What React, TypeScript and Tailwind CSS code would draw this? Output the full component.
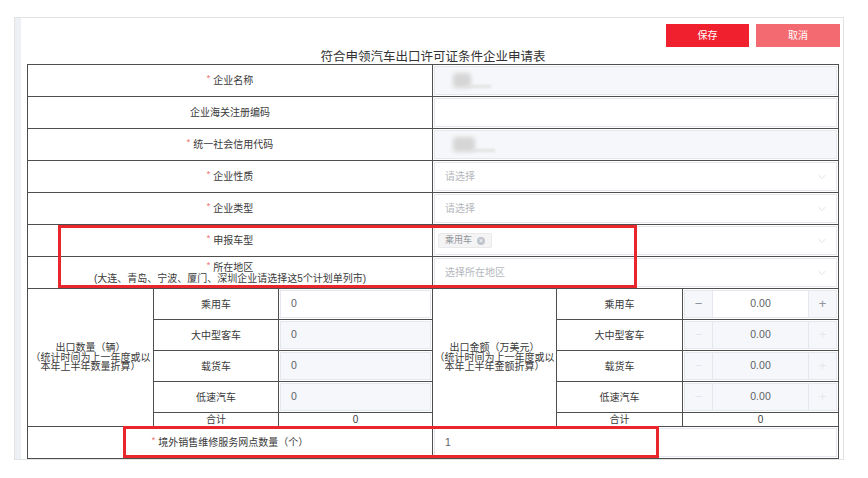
import React from 'react';
import { ChevronDown } from 'lucide-react';

const cell = 'bg-white flex items-center justify-center text-[10px] text-[#3a3a3a] text-center whitespace-nowrap';

const Req: React.FC = () => <span className="text-[#f56c6c] text-[9px] mr-[3px] -mt-[3px]">*</span>;

const Blur: React.FC<{ w: number }> = ({ w }) => (
  <div className="flex items-center ml-[8px]">
    <div className="h-[15px] bg-[#d6d6d6] blur-[2px] rounded-sm" style={{ width: w }} />
    <div className="h-[3px] w-[24px] bg-[#e2e2e2] blur-[1px] mt-[12px] -ml-[4px]" />
  </div>
);

const Input: React.FC<{ disabled?: boolean; children?: React.ReactNode; className?: string }> = ({ disabled, children, className = '' }) => (
  <div className={`bg-white p-[1px] flex ${className}`}>
    <div className={`flex-1 flex items-center border border-[#e4e7ed] px-[10px] text-[10.5px] text-[#606266] ${disabled ? 'bg-[#f5f7fa]' : 'bg-white'}`}>
      {children}
    </div>
  </div>
);

const Select: React.FC<{ placeholder?: string; children?: React.ReactNode }> = ({ placeholder, children }) => (
  <div className="col-span-3 bg-white p-[1px] flex">
    <div className="flex-1 flex items-center justify-between border border-[#e4e7ed] pl-[10px] pr-[8px] text-[10px]">
      {children ?? <span className="text-[#b4b7bd]">{placeholder}</span>}
      <ChevronDown size={12} strokeWidth={1} className="text-[#c0c4cc]" />
    </div>
  </div>
);

const Stepper: React.FC<{ active?: boolean }> = ({ active }) => (
  <div className="bg-white p-[1px] flex">
    <div className="flex-1 flex border border-[#e4e7ed] bg-[#f5f7fa] text-[10.5px]">
      <div className={`w-[28px] flex items-center justify-center border-r border-[#e4e7ed] text-[13px] ${active ? 'text-[#909399]' : 'text-[#e4e7ed]'}`}>−</div>
      <div className={`flex-1 flex items-center justify-center text-[#606266] ${active ? 'bg-white' : ''}`}>0.00</div>
      <div className={`w-[28px] flex items-center justify-center border-l border-[#e4e7ed] text-[13px] ${active ? 'text-[#909399]' : 'text-[#e4e7ed]'}`}>+</div>
    </div>
  </div>
);

const subRows = ['乘用车', '大中型客车', '载货车', '低速汽车'];

export default function App() {
  return (
    <div className="relative w-[868px] h-[478px] bg-white font-['Liberation_Sans','Noto_Sans_CJK_SC',sans-serif] overflow-hidden">
      <div className="ml-[14px] mt-[17px] w-[830px] h-[443px] border border-[#e2e2e2] flex">
        <div className="w-[6px] bg-[#edf1f5]" />
        <div className="flex-1 pt-[6px] pr-[3px]">
          <div className="flex justify-end gap-[7px]">
            <button className="w-[83px] h-[23px] bg-[#f0202e] text-white text-[10px]">保存</button>
            <button className="w-[84px] h-[23px] bg-[#f36b70] text-white text-[10px]">取消</button>
          </div>
          <div className="ml-[6px] w-[812px] h-[17px] pt-[3px] text-center text-[12.5px] leading-[14px] text-[#333]">
            符合申领汽车出口许可证条件企业申请表
          </div>
          <div className="ml-[6px] w-[812px] grid grid-cols-[125px_124px_153px_123px_125px_155px] grid-rows-[repeat(7,31px)_repeat(4,30px)_13px_31px] gap-px p-px bg-[#4f4f4f]">
            <div className={`${cell} col-span-3`}><Req />企业名称</div>
            <Input disabled className="col-span-3"><Blur w={18} /></Input>

            <div className={`${cell} col-span-3`}>企业海关注册编码</div>
            <Input className="col-span-3" />

            <div className={`${cell} col-span-3`}><Req />统一社会信用代码</div>
            <Input disabled className="col-span-3"><Blur w={22} /></Input>

            <div className={`${cell} col-span-3`}><Req />企业性质</div>
            <Select placeholder="请选择" />

            <div className={`${cell} col-span-3`}><Req />企业类型</div>
            <Select placeholder="请选择" />

            <div className={`${cell} col-span-3`}><Req />申报车型</div>
            <Select>
              <span className="-ml-[7px] h-[15px] px-[6px] flex items-center gap-[5px] bg-[#f4f4f5] border border-[#e9e9eb] rounded-[2px] text-[9px] text-[#909399]">
                乘用车
                <span className="w-[8px] h-[8px] rounded-full bg-[#c0c4cc] text-white text-[7px] leading-[8px] flex items-center justify-center">×</span>
              </span>
            </Select>

            <div className={`${cell} col-span-3 flex-col leading-[11px]`}>
              <div className="flex items-center"><Req />所在地区</div>
              <div>(大连、青岛、宁波、厦门、深圳企业请选择这5个计划单列市)</div>
            </div>
            <Select placeholder="选择所在地区" />

            <div className={`${cell} row-span-5 flex-col leading-[9.5px]`}>
              <div>出口数量（辆）</div>
              <div className="-mx-[4px]">（统计时间为上一年度或以</div>
              <div>本年上半年数量折算）</div>
            </div>
            <div className={cell}>{subRows[0]}</div>
            <Input>0</Input>
            <div className={`${cell} row-span-5 flex-col leading-[9.5px]`}>
              <div>出口金额（万美元）</div>
              <div className="-mx-[4px]">（统计时间为上一年度或以</div>
              <div>本年上半年金额折算）</div>
            </div>
            <div className={cell}>{subRows[0]}</div>
            <Stepper active />

            {subRows.slice(1).map(label => (
              <React.Fragment key={label}>
                <div className={cell}>{label}</div>
                <Input disabled>0</Input>
                <div className={cell}>{label}</div>
                <Stepper />
              </React.Fragment>
            ))}

            <div className={`${cell} leading-[13px]`}>合计</div>
            <div className={`${cell} leading-[13px] text-[10.5px]`}>0</div>
            <div className={`${cell} leading-[13px]`}>合计</div>
            <div className={`${cell} leading-[13px] text-[10.5px]`}>0</div>

            <div className={`${cell} col-span-3`}><Req />境外销售维修服务网点数量（个）</div>
            <Input className="col-span-3">1</Input>
          </div>
        </div>
      </div>

      {/* 标注框 */}
      <div className="absolute left-[58px] top-[225px] w-[579px] h-[63px] border-[3px] border-[#e8262b]" />
      <div className="absolute left-[123px] top-[426px] w-[536px] h-[32px] border-[3px] border-[#e8262b]" />
    </div>
  );
}
